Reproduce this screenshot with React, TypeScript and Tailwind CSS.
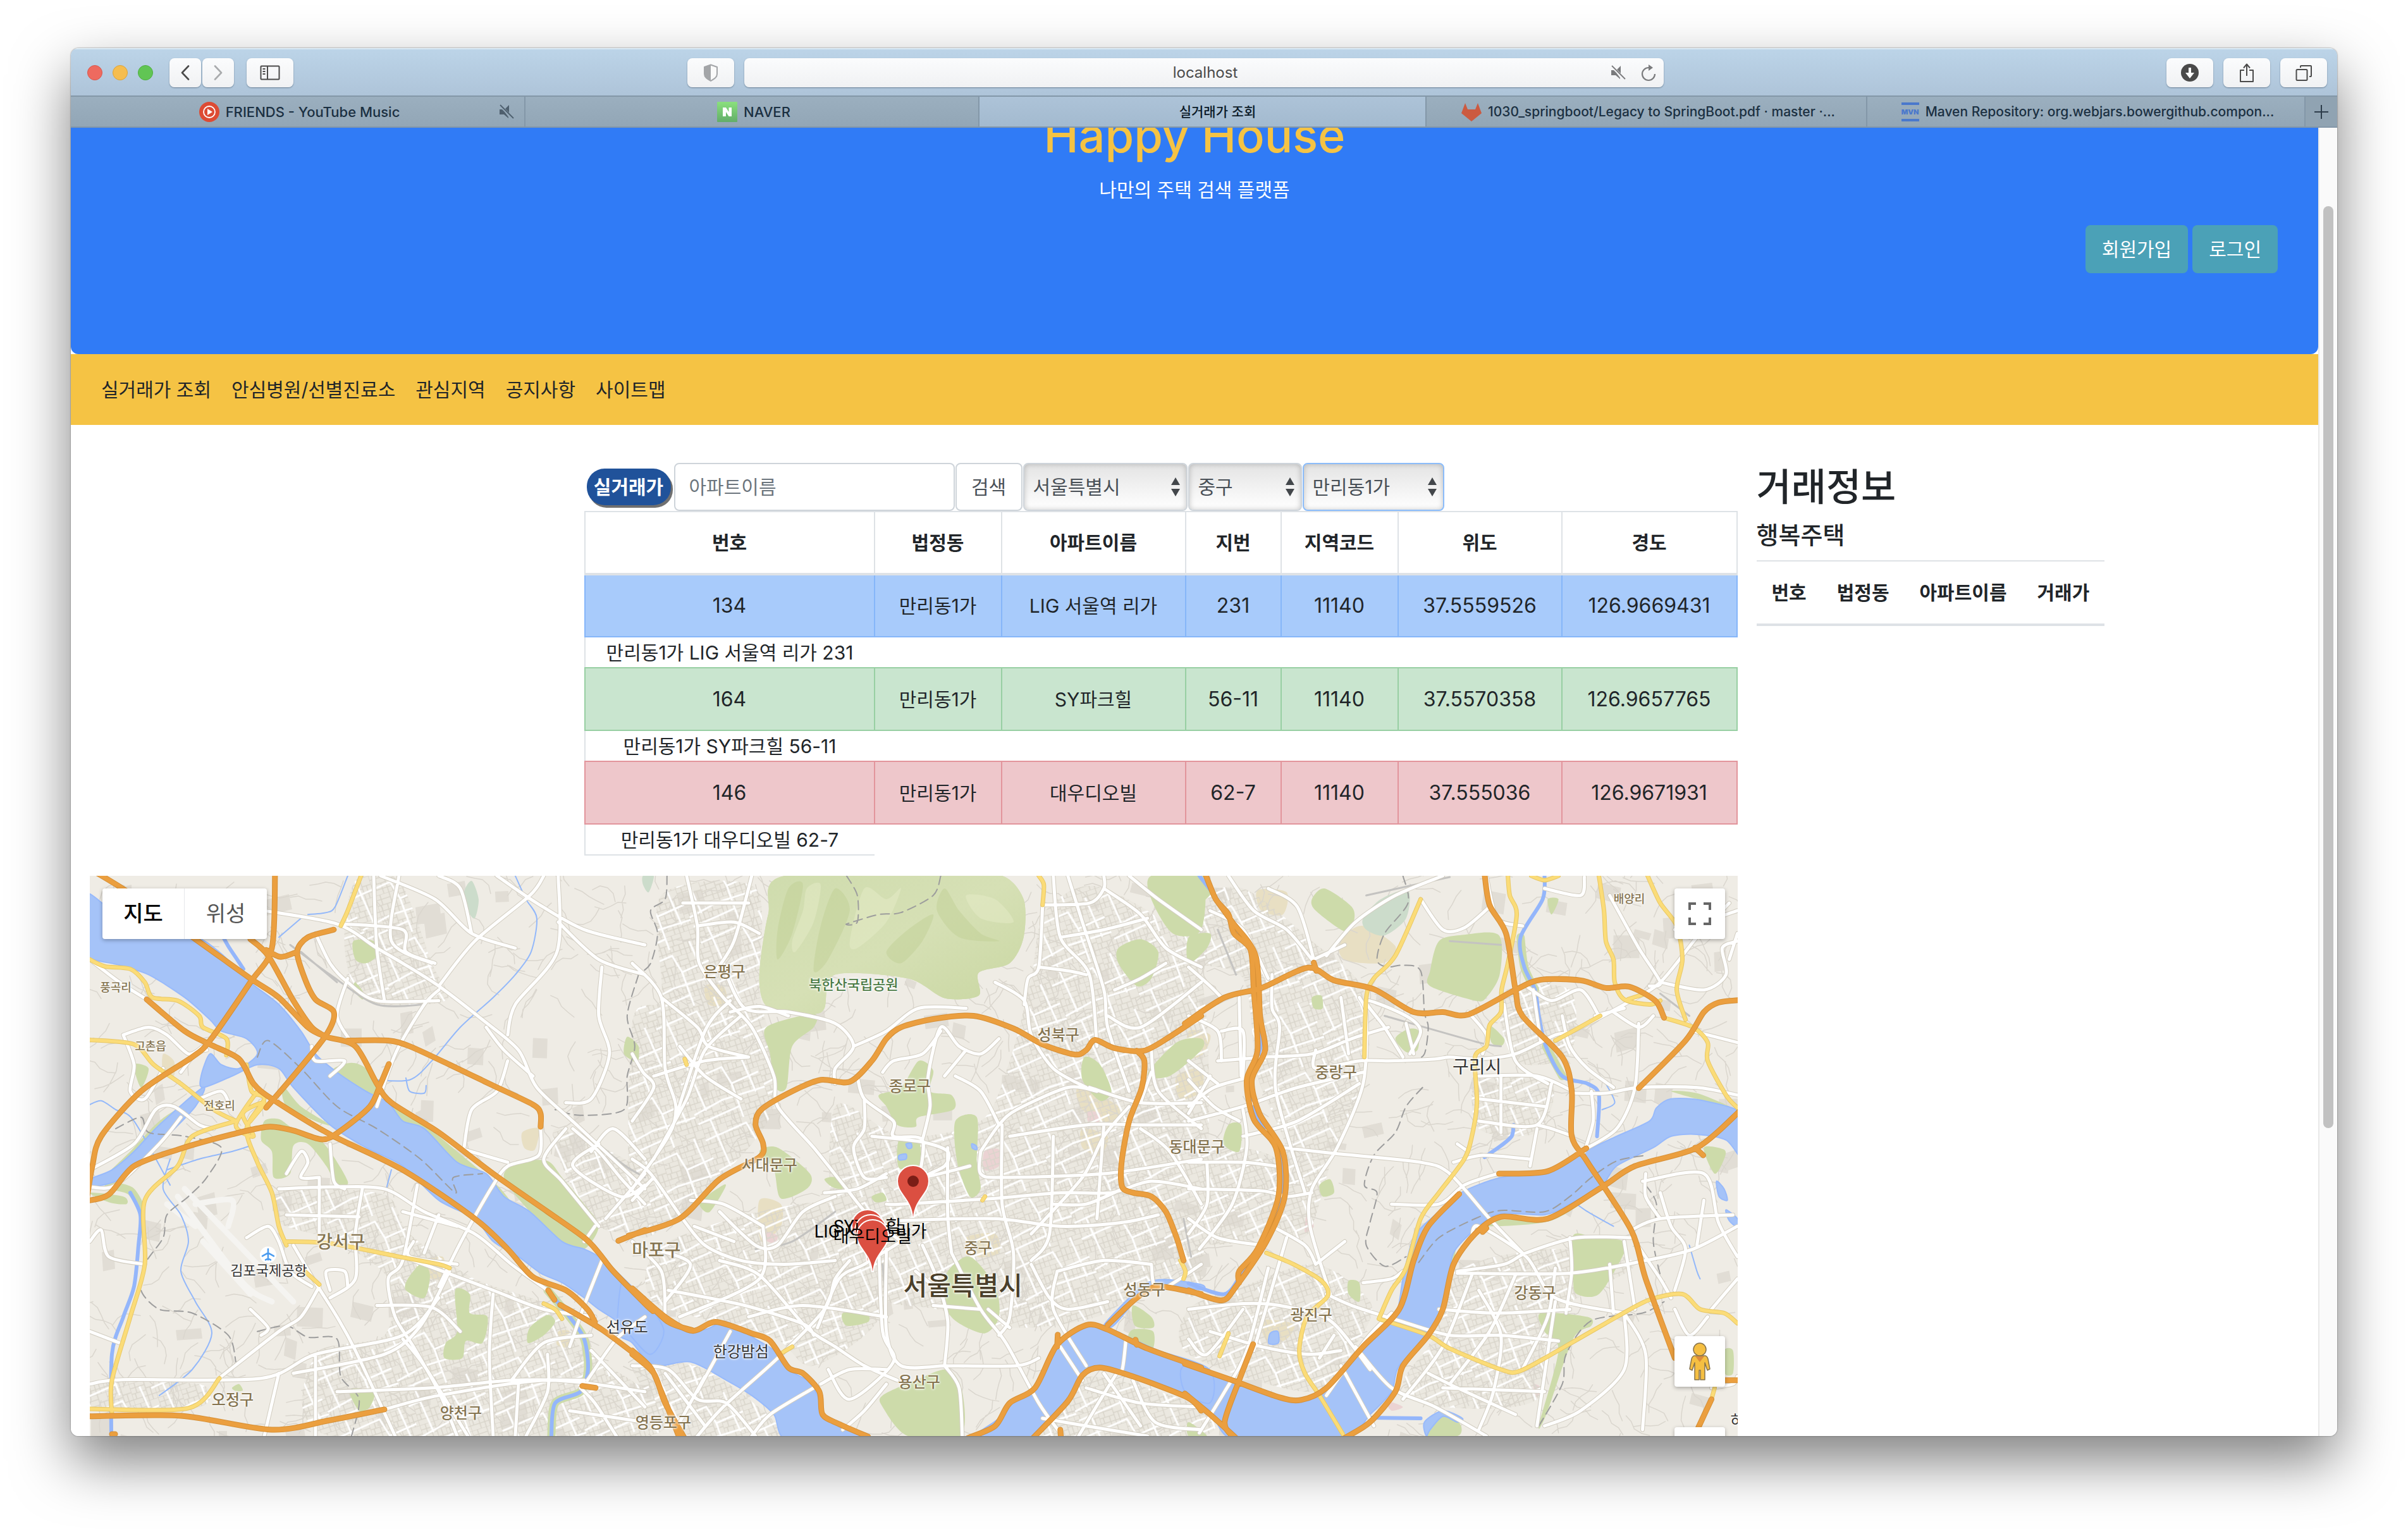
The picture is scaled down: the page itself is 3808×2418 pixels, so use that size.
import React from "react";

type Tile = string[];

const MAP_W = 2606;
const MAP_H = 884;
const ORIGINS = [-22, 858, 1738];
const SX = 0.574;
const SY = 0.593;

const project = (tile: number, u: number, v: number): [number, number] => [
  Math.round(ORIGINS[tile] + u * SX),
  Math.round(v * SY - 16),
];

function smooth(tile: number, src: string, closed = false): string {
  const p = src.split(" ").map((s) => {
    const [u, v] = s.split(",").map(Number);
    return project(tile, u, v);
  });
  const n = p.length;
  const at = (i: number) => (closed ? p[(i + n) % n] : p[Math.max(0, Math.min(n - 1, i))]);
  let d = `M${p[0][0]} ${p[0][1]}`;
  const last = closed ? n : n - 1;
  for (let i = 0; i < last; i++) {
    const a = at(i - 1);
    const b = at(i);
    const c = at(i + 1);
    const e = at(i + 2);
    d += `C${(b[0] + (c[0] - a[0]) / 7).toFixed(1)} ${(b[1] + (c[1] - a[1]) / 7).toFixed(1)} ${(c[0] - (e[0] - b[0]) / 7).toFixed(1)} ${(c[1] - (e[1] - b[1]) / 7).toFixed(1)} ${c[0]} ${c[1]}`;
  }
  return closed ? d + "Z" : d;
}

const layer = (tiles: Tile[], closed = false) =>
  tiles.map((t, i) => t.map((s) => smooth(i, s, closed)).join("")).join("");

const WATER: Tile[] = [
  [
    "20,75 100,120 200,185 330,190 400,235 480,310 560,370 620,440 660,500 720,550 800,600 860,630 900,680 960,700 1050,790 1130,820 1180,880 1250,920 1340,1000 1400,1020 1440,1040 1500,1090 1580,1170 1620,1240 1580,1300 1500,1220 1440,1180 1400,1150 1340,1110 1280,1085 1220,1040 1150,1000 1100,940 1000,890 900,800 800,750 700,690 600,590 560,540 500,530 430,560 350,590 345,560 370,500 400,530 450,540 500,500 470,460 400,440 370,410 300,350 200,290 120,265 20,230",
    "38,835 100,810 160,760 230,690 350,590 330,640 250,720 170,800 110,840 38,855",
  ],
  [
    "-30,1110 0,1140 60,1190 130,1235 200,1235 260,1215 340,1260 390,1290 430,1340 480,1370 510,1410 530,1470 600,1500 650,1530 430,1530 390,1460 330,1410 260,1370 160,1320 60,1330 0,1270 -40,1240",
    "920,1540 1010,1470 1040,1430 1110,1390 1150,1310 1190,1260 1250,1225 1310,1230 1380,1260 1450,1290 1590,1340 1590,1430 1480,1390 1360,1350 1290,1335 1240,1360 1200,1430 1150,1470 1080,1540",
    "1300,1222 1370,1150 1420,1110 1470,1102 1568,1115 1568,1128 1470,1118 1430,1128 1380,1165 1325,1225",
    "735,770 755,768 755,780 735,782",
    "755,740 768,738 770,750 760,752",
    "935,740 948,745 950,755 938,752",
  ],
  [
    "-10,1330 140,1375 260,1415 340,1410 400,1370 500,1270 570,1200 590,1100 620,990 680,930 750,870 860,830 1000,810 1080,765 1180,720 1270,680 1290,645 1330,620 1420,625 1530,665 1530,780 1480,730 1400,715 1330,720 1280,750 1180,800 1140,850 1050,900 980,930 860,925 800,960 730,1030 710,1130 670,1240 580,1330 560,1400 500,1460 420,1530 130,1530 60,1450 -10,1400",
    "225,1245 245,1240 248,1270 222,1272",
    "1455,840 1475,860 1485,890 1462,880",
    "1480,915 1512,940 1512,962 1490,945",
    "650,1480 700,1450 755,1470 740,1480 700,1465 665,1500 655,1517",
  ],
];

const STREAMS: Tile[] = [
  [
    "400,180 420,215 445,250 462,275",
    "150,870 178,930 172,1010 160,1120 130,1200 100,1300 98,1517",
    "1300,1130 1360,1200 1400,1260 1412,1340 1390,1400 1320,1430 1310,1517",
  ],
  [],
  [
    "980,27 975,90 915,190 925,270 955,330 965,400 985,480 1030,560 1100,580 1130,610 1125,720",
    "30,27 75,85 115,150 175,225 190,330 198,480 168,565 188,670 250,755 258,875 210,990 150,1080 100,1140 0,1112",
    "815,775 860,745 890,720 895,690",
    "500,1468 640,1470",
  ],
];

const BANKS: Tile[] = [
  ["90,850 150,865 180,910", "1300,1130 1360,1200 1400,1260 1412,1340 1390,1400 1320,1430 1310,1517"],
  [],
  ["915,190 925,270 955,330", "985,480 1030,560"],
];

const THIN_STREAMS: Tile[] = [
  [
    "750,27 715,110 690,125 640,130",
    "1210,27 1240,90 1270,140 1255,230 1210,290 1150,350 1060,430 980,520 920,570 820,570",
    "910,565 920,600 960,605 965,585",
    "260,780 240,860 290,930 310,1000 290,1080 330,1160 375,1245 320,1340 230,1410",
    "38,635 70,625 110,650 160,680 260,850",
    "250,810 340,780 430,760 480,745",
    "870,810 855,860",
    "560,190 620,140",
  ],
  [],
  ["1040,880 1100,920 1170,960", "1150,580 1175,630 1140,650", "1380,1010 1400,1080 1410,1100"],
];

const PARKS: Tile[] = [
  [
    "710,540 760,525 800,540 830,590 810,610 740,595 705,570",
    "520,680 560,675 600,700 680,735 750,840 720,850 690,800 640,740 600,745 590,820 545,830 540,760 510,730",
    "570,585 620,640 700,690 660,680 580,640",
    "1180,830 1220,790 1300,785 1340,830 1400,900 1440,960 1400,1020 1340,1000 1250,920",
    "1045,1130 1085,1140 1085,1190 1135,1200 1120,1270 1075,1265 1065,1310 1015,1310 1020,1270 1050,1240",
    "955,1055 975,1090 960,1150 910,1130 915,1100",
    "765,200 820,200 830,240 800,260 770,250",
    "1520,455 1550,480 1545,520 1510,500",
    "180,590 200,540 160,530",
    "1245,1270 1250,1230 1300,1195 1320,1215 1290,1250",
    "38,870 130,880 140,900 90,895",
    "150,760 230,680 300,640 250,720 190,790 110,850 80,830",
    "755,1395 820,1400 810,1440 780,1450",
    "770,310 795,340 790,355 765,330",
    "430,1390 450,1380 460,1397 440,1398",
    "860,620 950,680 1050,760 1160,850 1200,900 1130,850 1040,790 950,720 870,655",
  ],
  [
    "420,27 880,27 1020,27 1078,90 1078,190 1040,260 955,285 955,345 860,352 760,300 560,290 530,380 500,395 430,390 365,370 350,290 375,130",
    "370,430 500,395 500,430 440,480 425,590 395,590 380,500",
    "680,610 740,590 790,520 830,545 820,600 880,610 885,650 790,670 780,695 730,690 700,640",
    "735,730 790,728 790,800 735,805",
    "890,680 950,670 950,790 960,860 930,880 895,790",
    "870,1080 930,1040 1000,1120 1010,1200 970,1245 890,1210 850,1150",
    "690,1410 780,1370 870,1340 910,1400 905,1517 760,1517 690,1440",
    "1430,27 1568,27 1568,170 1490,180 1430,90",
    "1340,220 1400,195 1450,230 1430,300 1390,320 1340,260",
    "1500,470 1568,460 1568,490 1480,560 1420,555",
    "350,760 400,750 490,820 480,860 410,885 390,810",
    "1245,510 1290,530 1320,600 1290,625 1240,570",
    "230,1265 280,1260 340,1300 300,1310 235,1295",
    "580,1190 645,1190 650,1215 590,1225",
    "660,880 690,870 700,890 670,895",
    "1380,1170 1430,1200 1435,1230 1385,1225",
    "1380,1235 1435,1240 1430,1290 1370,1260",
    "0,480 18,500 15,520 0,518",
    "190,890 250,850 255,860 215,920 190,910",
    "530,835 560,830 580,860 550,855",
  ],
  [
    "690,200 760,183 855,185 857,290 820,350 790,360 665,320 665,280",
    "340,90 375,60 450,110 455,150 430,175 350,120",
    "0,27 50,27 65,70 0,120",
    "0,190 60,180 50,220 0,260",
    "605,435 635,440 630,490 600,495 570,460",
    "110,690 145,690 140,760 95,740",
    "360,850 390,835 400,870 370,880",
    "830,425 870,460 860,480 835,470",
    "770,870 860,835 1000,812 990,828 870,845 800,880",
    "820,945 980,935 1120,870 1000,945 830,960",
    "735,1020 715,1130 665,1240 640,1240 680,1100 700,1040",
    "1060,985 1120,990 1200,1000 1195,1040 1130,1140 1070,1140 1060,1100",
    "970,1190 1100,1200 1110,1225 1060,1260 990,1450 965,1490 1020,1290 980,1240",
    "670,1470 720,1460 750,1490 740,1517 655,1517",
    "1420,750 1475,755 1475,780 1450,820",
    "1330,600 1400,605 1490,640 1420,625",
    "440,1105 470,1110 470,1160 440,1140",
    "340,350 365,345 370,380 345,380",
    "990,90 1020,90 1000,130",
    "60,1360 150,1395 270,1430 180,1420",
    "0,1480 50,1517 0,1517",
    "1475,1290 1500,1290 1500,1350 1478,1350",
  ],
];

const SAND: Tile[] = [
  ["1230,710 1275,700 1265,755 1235,750", "1330,1240 1360,1240 1355,1280 1325,1275", "940,1060 1010,1040 1010,1100 950,1090", "240,500 270,520 270,560 240,550"],
  ["1230,590 1340,640 1320,690 1240,650", "1500,560 1568,540 1568,600 1510,620", "350,890 410,900 410,960 355,1000", "920,990 1000,980 1010,1030 950,1040", "1240,700 1310,720 1290,770 1240,750", "200,320 250,320 260,370 210,370"],
  ["425,190 480,160 570,215 540,258 440,255 415,230", "190,65 270,70 260,130 200,120", "0,440 60,450 40,500 0,510", "200,1210 290,1220 270,1260 220,1270", "520,100 570,80 605,70 580,110 540,130"],
];

const CEMETERY: Tile[] = [
  ["1070,70 1090,40 1110,90 1100,140 1080,120"],
  ["30,27 60,27 45,70 30,50"],
  ["480,140 530,90 605,65 600,140 540,185 490,170"],
];

const PINK: Tile[] = [
  [],
  ["970,760 1010,755 1010,800 970,810", "370,975 400,985 390,1005 365,995", "1255,655 1290,660 1280,690 1258,685"],
  ["325,930 345,960 320,975", "545,1425 590,1440 560,1450", "950,1380 970,1390 960,1415"],
];

const URBAN: Tile[] = [
  [
    "560,860 700,860 860,880 920,980 1100,1100 1300,1170 1400,1290 1568,1400 1568,1517 700,1517 660,1300 850,1250 860,1100 720,1000 560,950",
    "38,1380 340,1380 340,1440 38,1440",
    "1330,700 1568,820 1568,960 1440,960 1340,800",
    "770,40 890,40 980,260 1020,360 800,360 740,220",
  ],
  [
    "80,80 340,60 350,330 390,500 390,640 320,750 130,930 0,960 0,420 80,350",
    "560,640 740,720 960,680 1040,520 1100,300 1140,120 1300,60 1568,300 1568,1100 1450,1100 1280,1200 1050,1230 840,1180 680,1150 560,1000",
    "100,1000 560,900 690,1180 500,1330 380,1250 60,1160",
    "1120,1450 1260,1360 1568,1440 1568,1517 1120,1517",
    "0,1330 200,1340 420,1517 160,1517",
  ],
  [
    "0,100 150,60 340,200 480,330 480,560 400,760 330,980 240,960 270,760 190,560 150,300 0,250",
    "0,760 240,780 200,980 0,990",
    "150,1120 350,1060 500,1160 470,1260 340,1400 0,1300 0,1180",
    "730,1080 1000,1020 1230,1060 1000,1200 960,1420 700,1440 590,1380 680,1250",
    "800,560 1000,580 960,710 800,700",
    "860,340 1050,330 1050,500 900,520",
  ],
];

const ROADS: Tile[] = [
  [
    "38,250 120,310 195,355",
    "520,120 720,155 830,220 900,260 1000,320 1120,410 1220,490 1270,590 1380,690 1568,860",
    "1160,27 1270,100 1400,170 1568,210",
    "1000,330 960,370 890,480 860,550 830,640",
    "1280,695 1275,770 1190,800 1150,850 1095,940 1050,1020 1000,1120",
    "1000,320 1100,200 1250,80 1290,27",
    "1330,27 1325,230 1210,370 1190,450",
    "750,300 720,400 760,470",
    "660,180 700,260 750,310 830,360 1000,360",
    "820,27 830,220 850,360",
    "890,27 870,200 980,260",
    "740,155 900,170 910,230 990,260",
    "560,860 700,855 850,860 960,920 1100,980 1200,1060 1300,1130",
    "940,850 900,1050 860,1100 880,1200 930,1280 1000,1400 1050,1517",
    "790,860 770,980 770,1100 700,1150",
    "670,830 670,1000",
    "580,930 780,935",
    "600,1010 660,1110 720,1200 770,1290 880,1517",
    "38,1380 130,1367 510,1365 660,1300 900,1250 1000,1150",
    "600,1350 850,1300 950,1225 1030,1080",
    "900,1260 960,1330 1080,1517",
    "720,1400 980,1390 1200,1370 1400,1370",
    "850,1447 1000,1410 1300,1370 1568,1400",
    "670,1120 620,1200 560,1240 400,1360",
    "660,1300 660,1517",
    "560,1350 520,1517",
    "900,1040 1010,1080 1150,1130 1290,1180 1430,1200",
    "1150,1140 1140,1300 1150,1517",
    "1200,1370 1290,1270 1420,1250",
    "1450,1050 1400,1170 1360,1280",
    "1300,1300 1300,1400 1240,1517",
    "1220,1380 1210,1517",
    "1370,700 1440,760 1500,830 1568,900",
    "1350,700 1290,780 1340,840 1440,960",
    "1440,740 1370,800 1500,880 1568,850",
    "1460,940 1568,820",
    "1430,960 1400,1000",
    "900,920 1050,960",
    "1070,750 1090,650 1160,600 1190,520",
    "1070,755 1190,790",
    "38,855 110,850 230,740 290,670",
    "38,810 160,740 220,650 270,640 340,690 380,700",
    "130,450 160,530 150,600 190,620 240,540",
    "130,450 200,430 250,450 310,500 350,480",
    "290,550 330,500 360,490",
    "340,620 400,600 420,640 370,640",
    "470,990 530,960 560,1000 590,1080 650,1120",
    "38,1000 70,970 90,1040 190,1060",
    "480,1180 530,1230 510,1250",
    "700,1130 690,1080 740,1080 750,1120",
    "580,820 620,760 640,790 620,830 670,830",
    "700,740 710,840 740,860",
    "650,480 660,520 740,520 700,560",
    "1130,430 1180,490 1260,560",
    "840,27 990,90 1090,180 1210,220",
    "1090,180 1060,60 1000,27",
    "1450,270 1440,400 1470,500 1420,620 1350,630",
    "38,1240 120,1270",
    "1330,150 1440,250 1568,290",
    "930,1000 920,1040 1050,1060",
    "1000,930 960,1030",
    "830,1170 980,1175 1060,1240",
    "1490,1517 1430,1430 1390,1390",
    "1410,1370 1490,1260 1568,1200",
    "1420,1290 1568,1440",
    "1360,1450 1568,1480",
    "1568,780 1480,700 1420,760",
  ],
  [
    "150,27 180,160 185,260 250,350 330,430 390,560 400,640 500,750 590,860 650,930 740,1000",
    "0,260 80,350 90,540 120,640 100,720 0,860",
    "80,350 180,430 210,480 320,510",
    "60,560 200,520 320,510",
    "330,27 280,200 230,280",
    "140,100 320,100",
    "180,160 280,150 350,180",
    "0,500 30,550 60,590 0,680",
    "130,480 200,560 300,620",
    "300,400 200,490 150,620 60,780",
    "270,360 200,440 110,700",
    "0,780 50,820 130,930",
    "250,270 310,380 430,390 560,420 610,480 560,540 560,580",
    "270,390 350,375 430,400",
    "610,480 700,440 790,380 920,380",
    "620,560 640,620 720,680 720,720 800,730 790,840",
    "800,730 820,640 815,560 850,430 900,480 960,500 1010,460",
    "640,620 640,700 610,750 640,830 700,830",
    "690,550 720,520 800,500 850,440",
    "560,880 470,920 400,1010 340,1010 240,920",
    "530,870 620,860 700,820",
    "700,900 740,900 1000,885 1180,870 1320,870 1430,840 1568,860",
    "740,945 1000,940 1180,960 1350,950 1450,930",
    "660,720 800,735 870,760 860,800 800,830 930,800",
    "870,750 870,930 880,1030",
    "960,760 1010,690 1060,650 1200,590 1280,600",
    "960,760 960,820 1020,830 1300,820 1568,780",
    "1020,690 1020,900 1050,1030 1040,1200 1010,1250",
    "1040,720 1250,690 1400,690 1568,690",
    "1160,720 1150,980 1100,1050",
    "1300,690 1280,940",
    "1370,640 1300,720 1240,830 1100,980",
    "1260,590 1400,630 1568,630",
    "1000,310 1080,360 1100,450 1160,540 1250,590",
    "1130,110 1120,270 1090,300 1080,370",
    "1130,105 1260,100 1300,60 1300,27",
    "1160,27 1180,190 1260,290 1280,480",
    "1200,27 1240,150 1300,330 1310,430 1370,600",
    "1300,60 1400,130 1470,220 1568,270",
    "1370,27 1450,90 1568,170",
    "1330,330 1400,300 1470,260",
    "1120,270 1200,280 1250,290",
    "1180,190 1300,170 1420,140",
    "1310,400 1400,430 1568,310",
    "1430,490 1450,600 1568,700",
    "1400,700 1480,760 1568,900",
    "1350,860 1250,900 1160,900",
    "130,930 200,1010 300,1050 420,1060 560,1050",
    "240,1050 350,1090 480,1230 560,1280 640,1330 730,1370",
    "360,960 350,1100 130,1200",
    "60,1020 160,1060 90,1160",
    "0,1000 80,1080 90,1190",
    "100,1130 310,1170 470,1220 500,1250",
    "320,1200 470,1170 700,1200",
    "600,1050 560,1100 530,1180 400,1310 250,1440 180,1517",
    "740,1000 640,1060 570,1100 510,1230",
    "700,1020 700,1240 740,1330 860,1330",
    "860,1330 870,1210 840,1100 800,1010",
    "680,1020 690,1240 720,1320 600,1420 540,1340",
    "880,1030 960,1180 1030,1270 1120,1430 1180,1510",
    "1040,1230 980,1180",
    "830,1170 960,1180",
    "860,1330 900,1390 910,1517",
    "860,1330 1060,1330 1120,1310",
    "1170,1080 1160,1180 1250,1330",
    "1100,1060 1150,1150 1200,1180 1310,1160",
    "1170,1080 1300,1050 1430,1060",
    "1180,1280 1240,1370",
    "1360,1260 1350,1340 1330,1360 1230,1517",
    "500,1390 380,1460 330,1517",
    "270,1240 180,1400",
    "0,1330 100,1340 180,1420 260,1430 340,1517",
    "90,1350 200,1490",
    "200,1360 130,1480",
    "520,1380 600,1340 700,1340",
    "1130,1470 1250,1490 1420,1517",
    "1300,1350 1400,1490",
    "1380,1370 1440,1480 1568,1500",
    "1250,1390 1400,1430 1568,1440",
    "1430,1060 1450,1130 1568,1060",
    "580,1500 640,1450 700,1380",
    "780,1080 850,1140 870,1210",
    "890,560 960,600 1010,690",
    "860,560 920,490",
    "1430,550 1400,630",
    "0,890 60,830",
    "160,890 250,900 360,960",
    "170,960 280,1000",
  ],
  [
    "0,270 60,320 90,350",
    "110,27 180,120 270,170 340,250",
    "60,120 150,170 220,300",
    "220,60 300,110 345,250",
    "380,240 460,150 570,80 700,27",
    "345,250 430,210",
    "0,400 80,440 90,520",
    "90,440 150,440 150,560",
    "80,520 210,510 340,500 450,460 550,430",
    "140,350 145,560",
    "0,640 70,590 180,560",
    "230,290 230,380 250,430 240,600 320,870",
    "350,490 350,540 470,520 550,520 680,515 720,510 800,515 900,500 1010,450 1060,440 1200,370 1300,310 1400,190 1490,100",
    "420,350 440,500",
    "470,350 490,400 480,580 410,750 340,860 335,960 390,1140",
    "0,680 150,640 300,590 480,550",
    "150,720 300,680 470,580",
    "260,750 400,765 640,790 720,820 830,940 930,1040",
    "0,790 150,790 240,800",
    "0,860 200,865 270,880 340,870",
    "50,790 50,900 0,980",
    "150,650 160,750 120,900 30,1020",
    "0,940 80,990 200,1010",
    "230,960 320,1010 350,1060",
    "220,1070 160,1290 100,1400 30,1510",
    "270,990 180,1290",
    "0,1180 150,1165 250,1170 390,1210 500,1340",
    "150,1180 50,1300 0,1260",
    "380,1140 450,1170 580,1210 720,1250 860,1250 1020,1265",
    "60,1240 200,1280 330,1300 420,1290",
    "460,1280 560,1390 680,1440 820,1517",
    "420,1330 510,1490",
    "400,1250 360,1310",
    "380,1410 490,1260 560,1190",
    "690,1180 850,1190 1050,1180",
    "780,990 800,960 930,1040 1010,1150 1200,1190",
    "740,1085 1050,1085 1260,1050 1390,1020 1512,960",
    "740,1080 870,1060 930,1030 1070,990 1220,990",
    "1050,990 1055,1080 1040,1190",
    "780,1090 700,1280 590,1420",
    "900,1090 830,1240 720,1380",
    "1010,1070 990,1200 920,1340",
    "1160,1060 1170,1190",
    "800,1130 860,1250 840,1400 800,1500",
    "1200,1000 1230,1180",
    "1200,1190 1260,1300 1250,1500",
    "1200,1190 1200,1340 1080,1450 980,1490",
    "1250,840 1420,820 1460,950 1512,1040",
    "1260,820 1260,880 1300,940",
    "1220,970 1300,940 1500,930",
    "1300,870 1330,960 1370,1020 1340,1130",
    "1420,890 1400,1010",
    "1230,1000 1300,1100 1330,1150",
    "1440,1180 1512,1100",
    "700,1390 980,1400",
    "660,1350 740,1390 900,1460",
    "1010,1160 960,1490",
    "1060,605 1150,605 1240,590 1400,590 1512,610",
    "1240,420 1230,590 1180,700 1080,760",
    "1110,600 1115,680 1090,760",
    "930,320 1000,360 1080,330 1130,400",
    "1030,400 1050,480 1100,540 1170,590",
    "870,370 900,520 990,580",
    "950,330 970,470",
    "800,560 960,560 1060,600",
    "800,620 980,640",
    "860,560 860,710",
    "800,680 960,690 1000,580",
    "940,800 960,700",
    "770,390 820,450 810,500",
    "590,510 540,430 490,360 600,400 640,440 610,500",
    "730,790 810,770 940,780",
    "620,500 600,420",
    "740,740 770,760",
    "560,900 690,900 760,850 850,820",
    "1160,80 1240,220 1300,310 1270,320",
    "1170,390 1240,430 1280,400",
    "1300,310 1420,330 1480,290 1470,220 1512,200",
    "1410,190 1460,140 1512,120",
    "640,90 700,170 760,165 830,110",
    "920,160 850,140 820,27",
    "980,60 1080,80 1090,30",
    "1340,170 1380,190",
    "1490,250 1512,180",
    "1390,440 1512,470",
    "1120,400 1200,380",
    "1060,720 1000,700 960,690",
    "0,570 70,640 140,680",
    "0,520 80,580",
    "60,560 0,660",
    "1340,1180 1380,1250 1430,1200",
    "1440,1390 1500,1380 1512,1360",
    "350,1060 430,1000",
    "480,1110 560,1100 590,1080",
  ],
];

const LANES: Tile[] = [
  ["590,210 700,290 830,370 960,370", "620,230 720,310", "1568,830 1500,790 1380,690"],
  ["690,1060 700,1180", "340,1020 440,1000 560,920", "1520,940 1540,1040"],
  ["540,400 800,470 860,480", "80,170 130,290", "490,80 720,30", "720,200 860,210", "1300,340 1380,400"],
];

const RUNWAYS: Tile[] = [
  ["280,880 460,1110 540,1160", "300,860 500,1060 600,1160", "330,900 430,890 420,960", "350,1000 480,1140", "250,900 330,960"],
  [],
  [],
];

const DASHES: Tile[] = [
  ["500,510 530,465 620,540 720,640 830,700 950,780 1045,870 1040,830 1120,820", "1550,290 1520,400 1540,480 1520,560 1510,650 1390,665 1320,650", "110,700 180,670 200,710 300,720 400,750 360,830 310,880 250,930 240,990 190,1060 180,1130 230,1180 320,1190 420,1250 440,1320", "500,1240 580,1225 640,1255 720,1260 730,1360 780,1420 760,1517"],
  ["590,27 620,80 620,150 590,155 680,130 740,125 830,80 850,27", "95,27 90,90 50,120 70,180 50,260 15,290"],
  ["590,27 605,100 540,180 520,250 545,270 590,265 640,280 650,390 660,430 650,500 620,520", "645,590 600,640 570,710 510,770 485,850 520,870 500,950 490,1010 540,1065 600,1040", "635,1055 690,990 790,940 860,918 980,920 1050,880 1110,830 1180,785 1260,770", "1260,850 1290,900 1280,1000 1300,1090", "965,1490 1030,1380 1040,1300 1110,1210 1250,1190 1310,1160"],
];

const YELLOW: Tile[] = [
  [
    "785,27 750,120 730,160",
    "38,250 80,268 150,275 190,310 210,350 280,360 340,400 350,430 415,460 415,505",
    "38,463 160,475 215,530 290,580 380,650 440,680",
    "470,530 485,600 520,620 470,700 500,790 540,870 560,960 580,1010",
    "440,680 320,720 280,800 190,890 190,1060 150,1200 100,1370 100,1460",
    "575,1000 700,1005 890,1040 1000,1060 1030,1070",
    "630,1080 670,1115",
    "38,1446 310,1443 395,1365",
    "1290,1165 1320,1180 1340,1205",
    "500,600 440,690 490,720 460,660 520,630 480,680",
  ],
  ["1120,27 1135,50 1130,105", "145,515 150,530", "415,1295 440,1280", "965,890 972,880", "1510,1050 1525,1080 1520,1100"],
  [
    "640,90 570,240 510,300 490,350 485,510",
    "215,1030 290,1060 365,1105 383,1145 325,1200 305,1290 320,1350 360,1410 425,1512",
    "110,1245 85,1305",
    "880,27 885,80 905,130 880,260 862,330 860,390 830,425 820,480 790,510 795,630 780,720 760,780 690,870 640,940 600,1070 560,1130 525,1205",
    "525,1205 660,1250 720,1285 860,1340 910,1345 1000,1300 1180,1200 1270,1155 1360,1140 1410,1180 1475,1190 1512,1218",
    "1130,27 1145,120 1150,200 1170,250 1175,310 1200,355 1270,370 1300,360",
    "945,27 980,38 1020,27",
    "1265,27 1300,100 1345,160 1360,250 1345,330 1370,410",
    "1310,405 1390,430 1430,470 1430,520 1480,610 1512,645",
    "1260,340 1210,355",
    "1135,400 1060,440 1010,465",
    "1450,1390 1440,1420",
  ],
];

const ORANGE: Tile[] = [
  [
    "50,15 150,75 330,195 480,300 560,350 640,430 690,455 770,480 830,580 870,630 1000,710 1150,820 1300,920 1400,990 1440,1030 1480,1080 1568,1165 1590,1185",
    "548,20 540,220 480,310 370,465 320,510 180,600 70,720 45,800 30,890",
    "480,195 530,240 600,360 650,430 690,455",
    "710,170 640,190 610,230 630,300 660,355 710,390 690,450 600,560 525,645",
    "525,225 565,242 610,230",
    "750,465 860,465 920,480 1030,530 1150,585 1260,635 1280,660 1280,695",
    "195,355 300,440 370,475 450,515 490,580 540,620 700,715 900,810 1100,940 1190,1020 1260,1095 1350,1130 1410,1180 1430,1215",
    "30,892 90,875 160,800 280,755 430,715 530,695 600,705 680,728 730,705 810,640 840,580 863,527",
    "30,1465 290,1463 540,1500 700,1475 850,1447",
    "1335,1168 1450,1235 1568,1320",
    "1302,1130 1318,1155",
    "1395,1385 1432,1390",
    "1495,998 1568,970",
    "100,1512 108,1512",
  ],
  [
    "-10,984 130,940 240,835 350,775 360,740 340,690 355,650 440,600 520,570 600,575 660,520 700,460 740,430 830,408 940,400 1050,433 1130,475 1220,503 1250,490 1275,463 1330,485 1410,492 1480,455 1568,400",
    "1390,492 1412,520 1405,590 1370,680 1348,790 1350,855 1380,870 1430,880 1470,920 1500,990 1520,1050",
    "0,1125 90,1200 165,1238 230,1215 330,1245 380,1265 430,1335 470,1350 515,1400 525,1460 570,1485 650,1520",
    "30,1150 100,1215 165,1236",
    "0,1300 60,1350 90,1430 145,1525",
    "0,1290 50,1335 80,1400 130,1525",
    "925,1522 1000,1490 1040,1430 1110,1390 1170,1275 1250,1223 1310,1235 1420,1285 1568,1335",
    "1105,1522 1200,1425 1240,1355 1290,1335 1380,1360 1530,1415 1568,1450",
    "1310,1223 1390,1150 1450,1120 1568,1140",
    "1172,1248 1170,1280",
    "1180,1500 1182,1520",
    "1386,1262 1390,1275",
  ],
  [
    "45,20 75,90 110,130 125,180 170,225 180,330 190,490 160,570 180,675 240,750 248,880 190,1020 140,1080 140,1110",
    "75,90 120,150 185,240 196,400 210,490 175,570 195,660 260,760 265,880 215,1000 130,1120 90,1157 0,1130",
    "-10,420 100,350 200,325 330,272 400,305 510,328 620,390 700,390 770,397 900,330 970,303 1080,305 1150,325 1215,322 1285,360 1310,405",
    "345,258 352,280",
    "815,20 830,105 875,180 900,330 920,400 1030,510 1055,600 1055,720 1100,790 1220,970 1260,1100 1340,1310",
    "1240,592 1370,465 1420,390 1460,365 1520,357",
    "855,820 990,812 1095,752",
    "1520,652 1400,750 1230,800 1140,855 990,940 860,935 790,980 730,1060 700,1180 660,1250 590,1330 570,1400 500,1480 430,1522",
    "1395,750 1418,770",
    "745,873 660,960 620,1050 580,1180 480,1280 380,1390 310,1422 250,1415 120,1370 -10,1325",
    "178,1273 140,1370 100,1480 125,1522",
    "-10,1405 60,1460 130,1522",
    "1477,1370 1520,1370",
    "1440,1420 1405,1495",
    "810,975 820,965",
  ],
];

/* Deterministic scatter of short crooked side streets. */
function sideStreets(): string {
  let s = 7;
  const r = () => {
    s = (s * 16807) % 2147483647;
    return s / 2147483647;
  };
  let d = "";
  for (let i = 0; i < 1300; i++) {
    let x = r() * MAP_W;
    let y = r() * MAP_H;
    let a = r() * 6.3;
    d += `M${x.toFixed(0)} ${y.toFixed(0)}`;
    for (let k = 0; k < 4; k++) {
      a += (r() - 0.5) * 1.4;
      x += Math.cos(a) * 13;
      y += Math.sin(a) * 13;
      d += `L${x.toFixed(0)} ${y.toFixed(0)}`;
    }
  }
  return d;
}

function blocks(): string {
  let s = 91;
  const r = () => {
    s = (s * 16807) % 2147483647;
    return s / 2147483647;
  };
  let d = "";
  for (let i = 0; i < 200; i++) {
    const x = r() * MAP_W;
    const y = r() * MAP_H;
    const w = 12 + r() * 30;
    const h = 10 + r() * 26;
    const k = (r() - 0.5) * 20;
    d += `M${x.toFixed(0)} ${y.toFixed(0)}l${w.toFixed(0)} ${k.toFixed(0)}l${(-k / 2).toFixed(0)} ${h.toFixed(0)}l${(-w).toFixed(0)} ${(-k).toFixed(0)}z`;
  }
  return d;
}

const SIDE = sideStreets();
const BLOCKS = blocks();

type Label = { t: number; u: number; v: number; text: string; cls: string };
const gu = "text-[24px] font-medium text-[#857450]";
const guL = "text-[28px] font-medium text-[#857450]";
const ri = "text-[18px] font-medium text-[#857450]";
const poi = "text-[24px] text-[#333333]";

const LABELS: Label[] = [
  { t: 0, u: 110, v: 325, text: "풍곡리", cls: ri },
  { t: 0, u: 205, v: 480, text: "고촌읍", cls: ri },
  { t: 0, u: 395, v: 639, text: "전호리", cls: ri },
  { t: 0, u: 730, v: 1004, text: "강서구", cls: guL },
  { t: 0, u: 531, v: 1080, text: "김포국제공항", cls: "text-[22px] text-[#333333]" },
  { t: 0, u: 432, v: 1421, text: "오정구", cls: gu },
  { t: 0, u: 1061, v: 1457, text: "양천구", cls: gu },
  { t: 1, u: -14, v: 1228, text: "선유도", cls: poi },
  { t: 1, u: 300, v: 1294, text: "한강밤섬", cls: poi },
  { t: 1, u: 85, v: 1483, text: "영등포구", cls: gu },
  { t: 1, u: 66, v: 1026, text: "마포구", cls: guL },
  { t: 1, u: 254, v: 284, text: "은평구", cls: gu },
  { t: 1, u: 609, v: 319, text: "북한산국립공원", cls: "text-[22px] font-medium text-[#4a7a45]" },
  { t: 1, u: 1175, v: 451, text: "성북구", cls: gu },
  { t: 1, u: 765, v: 587, text: "종로구", cls: gu },
  { t: 1, u: 378, v: 798, text: "서대문구", cls: gu },
  { t: 1, u: 953, v: 1018, text: "중구", cls: gu },
  { t: 1, u: 911, v: 1119, text: "서울특별시", cls: "text-[41px] font-medium text-[#4a3f2a]" },
  { t: 1, u: 1411, v: 1130, text: "성동구", cls: gu },
  { t: 1, u: 791, v: 1374, text: "용산구", cls: gu },
  { t: 2, u: 22, v: 748, text: "동대문구", cls: gu },
  { t: 2, u: 406, v: 550, text: "중랑구", cls: gu },
  { t: 2, u: 795, v: 536, text: "구리시", cls: "text-[28px] text-[#333333]" },
  { t: 2, u: 1215, v: 90, text: "배양리", cls: ri },
  { t: 2, u: 338, v: 1195, text: "광진구", cls: gu },
  { t: 2, u: 955, v: 1139, text: "강동구", cls: gu },
  { t: 2, u: 1512, v: 1477, text: "하", cls: poi },
];

const MARKERS = [
  { u: 773, v: 937, label: "", dot: true },
  { u: 648, v: 1055, label: "SY파크힐", dot: false },
  { u: 656, v: 1069, label: "LIG 서울역 리가", dot: false },
  { u: 662, v: 1083, label: "대우디오빌", dot: false },
];

const spot = (t: number, u: number, v: number) => {
  const [x, y] = project(t, u, v);
  return { left: `${(x / MAP_W) * 100}%`, top: `${(y / MAP_H) * 100}%` };
};

function MapArt() {
  return (
    <svg viewBox={`0 0 ${MAP_W} ${MAP_H}`} preserveAspectRatio="none" className="block h-full w-full" fill="none" strokeLinecap="round" strokeLinejoin="round" aria-hidden="true">
      <defs>
        <pattern id="streets" width="38" height="34" patternUnits="userSpaceOnUse" patternTransform="rotate(-18)">
          <path d="M0 0H38M0 8H24M24 14H38M0 17H24M0 26H38M0 0V34M9 0V17M16 17V34M24 0V34M31 14V34M6 17V26" stroke="#d9d5cb" strokeWidth="1.6" />
        </pattern>
        <pattern id="avenues" width="120" height="96" patternUnits="userSpaceOnUse" patternTransform="rotate(-24)">
          <path d="M0 10H70L74 40H120M0 62L50 58L120 66M20 0V62M74 40L70 96M104 0V66M20 78V96M0 78H70" stroke="#ffffff" strokeWidth="3" fill="none" />
        </pattern>
        <linearGradient id="mt" x1="0" y1="0" x2="1" y2="1">
          <stop offset="0" stopColor="#cfdcad" />
          <stop offset="0.5" stopColor="#d6e0b5" />
          <stop offset="1" stopColor="#c8d6a0" />
        </linearGradient>
      </defs>
      <rect width={MAP_W} height={MAP_H} fill="#efece5" />
      <path d={layer(URBAN, true)} fill="#ebe8e0" />
      <path d={BLOCKS} fill="#e1ddd5" />
      <path d={layer(SAND, true)} fill="#e8dfc3" />
      <path d={layer(PINK, true)} fill="#ebd3d3" />
      <path d={layer(URBAN, true)} fill="url(#streets)" />
      <path d={SIDE} stroke="#dad6ce" strokeWidth="1.5" />
      <path d={layer(URBAN, true)} fill="url(#avenues)" />
      <path d={layer(RUNWAYS)} stroke="#f5f4f1" strokeWidth="9" />
      <path d={layer(PARKS, true)} fill="#cddbaa" />
      <path d={smooth(1, PARKS[1][0], true)} fill="url(#mt)" />
      <path d={layer([[], ["430,60 470,50 440,180 400,250 400,170", "560,60 600,120 540,250 500,280 520,160", "860,60 900,120 960,180 1010,200 900,190 840,120", "700,230 760,170 830,130 800,200 740,260"], []], true)} fill="#bfce92" opacity="0.45" />
      <path d={layer([[], ["480,60 520,50 500,150 450,230 440,200 470,120", "640,60 700,90 740,60 700,150 620,220 600,200", "920,80 1000,90 1050,150 960,140"], []], true)} fill="#e6ebc8" opacity="0.5" />
      <path d={layer(CEMETERY, true)} fill="#ccdccb" />
      <path d={layer(THIN_STREAMS)} stroke="#93b8fa" strokeWidth="2" />
      <path d={layer(BANKS)} stroke="#cddbaa" strokeWidth="13" />
      <path d={layer(WATER, true)} fill="#a5c3f8" stroke="#98bafb" strokeWidth="2" />
      <path d={layer(STREAMS)} stroke="#94b6fb" strokeWidth="6" />
      <path d={layer(LANES)} stroke="#c4c3c1" strokeWidth="3" />
      <path d={layer(DASHES)} stroke="#9d9d9d" strokeWidth="2" strokeDasharray="14 8" />
      <path d={layer(ROADS)} stroke="#d2cdc1" strokeWidth="7" />
      <path d={layer(ROADS)} stroke="#ffffff" strokeWidth="5" />
      <path d={layer(YELLOW)} stroke="#e8c766" strokeWidth="7" />
      <path d={layer(YELLOW)} stroke="#fbdc78" strokeWidth="5" />
      <path d={layer(ORANGE)} stroke="#d68f35" strokeWidth="9" />
      <path d={layer(ORANGE)} stroke="#eb9f3f" strokeWidth="7" />
      <circle cx="282" cy="598" r="13" fill="#ffffff" />
      <path d="M282 589v17M273 600l9-5 9 5M278 606l4-2 4 2" stroke="#4a9bef" strokeWidth="2.5" />
    </svg>
  );
}

function MapPanel() {
  const card = "rounded-sm bg-white shadow-[0_2px_6px_rgba(0,0,0,0.3)]";
  return (
    <section aria-label="지도" className="relative min-h-0 flex-1 overflow-hidden bg-[#efece5] font-['Roboto','Noto_Sans_CJK_KR',sans-serif]">
      <MapArt />
      {LABELS.map((l) => (
        <span key={l.text} style={spot(l.t, l.u, l.v)} className="absolute -translate-x-1/2 -translate-y-1/2 whitespace-nowrap leading-none [text-shadow:0_0_3px_#fff,0_0_3px_#fff,0_0_5px_#fff]">
          <span className={l.cls}>{l.text}</span>
        </span>
      ))}
      {MARKERS.map((m) => (
        <button key={m.label} type="button" aria-label={m.label || "서울특별시"} style={spot(1, m.u, m.v)} className="absolute h-[84px] w-[52px] -translate-x-1/2 -translate-y-full">
          <svg viewBox="0 0 52 84" className="block h-full w-full" aria-hidden="true">
            <path d="M26 1C12 1 1 12 1 26c0 20 22 28 24 57h2c2-29 24-37 24-57C51 12 40 1 26 1z" fill="#db4f41" stroke="#ffffff" strokeWidth="2" />
            {m.dot && <circle cx="26" cy="26" r="9" fill="#7b1d16" />}
          </svg>
          {m.label && <span className="absolute top-3 left-1/2 -translate-x-1/2 text-[27px] leading-8 whitespace-nowrap text-black">{m.label}</span>}
        </button>
      ))}
      <div className={`absolute top-5 left-5 flex h-20 text-[34px] leading-none ${card}`}>
        <button type="button" className="w-[130px] border-r border-gray-200 font-medium text-black">지도</button>
        <button type="button" className="w-[130px] text-[#565656]">위성</button>
      </div>
      <button type="button" aria-label="전체 화면" className={`absolute top-5 right-5 flex size-20 items-center justify-center ${card}`}>
        <svg viewBox="0 0 36 36" className="size-9" aria-hidden="true" fill="none" stroke="#666666" strokeWidth="4">
          <path d="M2 12V2h10M24 2h10v10M34 24v10H24M12 34H2V24" />
        </svg>
      </button>
      <div className="absolute right-5 bottom-[-66px] flex flex-col gap-16">
        <button type="button" aria-label="스트리트 뷰" className={`flex size-20 items-center justify-center ${card}`}>
          <svg viewBox="0 0 34 60" className="h-[60px] w-[34px]" aria-hidden="true" fill="#f5bf42" stroke="#87734b" strokeWidth="1.5" strokeLinejoin="round">
            <path d="M9 21h16c3 0 4 2 5 5l3 16-4 2-4-12v27h-7V44h-2v15H9V32L5 44l-4-2 3-16c1-3 2-5 5-5z" />
            <circle cx="17" cy="11" r="10" />
            <path d="M10 22h14l-7 9z" fill="#db8a3c" stroke="none" />
          </svg>
        </button>
        <button type="button" aria-label="확대" className={`size-20 ${card}`} />
      </div>
    </section>
  );
}

const toolBtn = "flex h-[46px] items-center justify-center rounded-lg bg-linear-to-b from-[#fbfcfd] to-[#f0f1f3] shadow-[0_1px_2px_rgba(60,80,100,0.6)]";

function Mute({ className }: { className: string }) {
  return (
    <svg viewBox="0 0 24 24" className={className} fill="currentColor" aria-hidden="true">
      <path d="M1 8h4l4 4v0l6 8v2l-7-6H1zM10 7l6-6v12z" />
      <path d="M2 1l21 21" stroke="currentColor" strokeWidth="1.8" />
    </svg>
  );
}

function Toolbar() {
  return (
    <div className="relative flex h-[75px] items-center justify-between border-t-2 border-[#dbeaf4] bg-linear-to-b from-[#bcd4e8] to-[#aec4d9] px-4">
      <div className="flex items-center">
        <div className="ml-2.5 flex gap-4">
          <span className="size-6 rounded-full border border-[#d9564c] bg-[#ee6a5f]" />
          <span className="size-6 rounded-full border border-[#dba33a] bg-[#f5bd4f]" />
          <span className="size-6 rounded-full border border-[#4fae3f] bg-[#61c554]" />
        </div>
        <div className="ml-[26px] flex gap-0.5">
          <button type="button" aria-label="Back" className={`${toolBtn} w-[50px]`}>
            <svg viewBox="0 0 14 24" className="h-6 w-3.5" fill="none" stroke="#4a4a4a" strokeWidth="2.6" strokeLinecap="round" strokeLinejoin="round"><path d="M12 1.500L2 12l10 10.500" /></svg>
          </button>
          <button type="button" aria-label="Forward" className={`${toolBtn} w-[50px]`}>
            <svg viewBox="0 0 14 24" className="h-6 w-3.5" fill="none" stroke="#a9abad" strokeWidth="2.600" strokeLinecap="round" strokeLinejoin="round"><path d="M2 1.500L12 12L2 22.500" /></svg>
          </button>
        </div>
        <button type="button" aria-label="Sidebar" className={`${toolBtn} ml-5 w-[74px]`}>
          <svg viewBox="0 0 32 24" className="h-6 w-8" fill="none" stroke="#4a4a4a" strokeWidth="2"><rect x="1.500" y="1.500" width="29" height="21" rx="1" /><path d="M12 1v22M4.500 6h4M4.500 10h4M4.500 14h4" /></svg>
        </button>
      </div>
      <div className="absolute inset-x-0 mx-auto flex w-fit">
        <button type="button" aria-label="Privacy Report" className={`${toolBtn} mr-4 -ml-[90px] w-[74px]`}>
          <svg viewBox="0 0 24 28" className="h-7 w-6" aria-hidden="true"><path d="M12 1.500L2 5v11c0 5 4 7.500 10 11 6-3.500 10-6 10-11V5z" fill="#fafafa" stroke="#a3a5a8" strokeWidth="2" strokeLinejoin="round" /><path d="M12 1.500L2 5v11c0 5 4 7.500 10 11z" fill="#a3a5a8" /></svg>
        </button>
        <div className={`${toolBtn} relative w-[1454px] text-[#4a4a4a]`}>
          <input aria-label="Address" defaultValue="localhost" className="w-full bg-transparent pl-1 text-center text-[24px] leading-8 outline-none" />
          <div className="absolute inset-y-0 right-3 flex items-center gap-6 text-[#7a7b7d]">
            <Mute className="size-6" />
            <svg viewBox="0 0 24 28" className="h-7 w-6" fill="none" stroke="currentColor" strokeWidth="2.200"><path d="M22 16a10 10 0 1 1-10-10h4" /><path d="M12 1l7 5-7 5z" fill="currentColor" stroke="none" /></svg>
          </div>
        </div>
      </div>
      <div className="flex gap-4">
        <button type="button" aria-label="Downloads" className={`${toolBtn} w-[74px]`}>
          <svg viewBox="0 0 28 28" className="size-7"><circle cx="14" cy="14" r="14" fill="#4a4a4a" /><path d="M12 6h4v8h5l-7 9-7-9h5z" fill="#fff" /></svg>
        </button>
        <button type="button" aria-label="Share" className={`${toolBtn} w-[74px]`}>
          <svg viewBox="0 0 22 30" className="h-[30px] w-[22px]" fill="none" stroke="#4a4a4a" strokeWidth="2" strokeLinejoin="round"><path d="M7 11H1v18h20V11h-6M11 20V2M6 7.500L11 1.500l5 6" /></svg>
        </button>
        <button type="button" aria-label="Tab overview" className={`${toolBtn} w-[74px]`}>
          <svg viewBox="0 0 26 26" className="size-[26px]" fill="none" stroke="#4a4a4a" strokeWidth="2"><rect x="1.500" y="8" width="17" height="17" rx="1.500" /><path d="M8 5V3q0-1 1-1h15q1 0 1 1v15q0 1-1 1h-2" /></svg>
        </button>
      </div>
    </div>
  );
}

function TabBar() {
  const tab = "relative flex min-w-0 items-center justify-center gap-2.5 border-r-2 border-[#8397a8] bg-linear-to-b from-[#9bafbf] to-[#92a6b6] pl-1.5 text-[#1b3042]";
  return (
    <div role="tablist" className="grid h-[51px] grid-cols-[719fr_718fr_707fr_697fr_693fr_50px] border-y-2 border-[#8397a8] text-[21px] leading-6 font-medium">
      <button role="tab" aria-selected="false" className={tab}>
        <svg viewBox="0 0 32 32" className="size-8"><circle cx="16" cy="16" r="16" fill="#dd4b34" /><circle cx="16" cy="16" r="9" fill="none" stroke="#fff" strokeWidth="1.800" /><path d="M13 11l8 5-8 5z" fill="#fff" /></svg>
        <span className="text-[22px]">FRIENDS - YouTube Music</span>
        <Mute className="absolute right-4 size-6 text-[#4e5f6e]" />
      </button>
      <button role="tab" aria-selected="false" className={tab}>
        <svg viewBox="0 0 32 32" className="size-8"><defs><linearGradient id="nv" x1="0" y1="0" x2="0" y2="1"><stop offset="0" stopColor="#8ae07d" /><stop offset="1" stopColor="#62ad69" /></linearGradient></defs><rect width="32" height="32" rx="1" fill="url(#nv)" /><path d="M9 9h5l4.500 7V9H23v14h-4.500L14 16v7H9z" fill="#fff" /></svg>
        <span className="text-[22px]">NAVER</span>
      </button>
      <button role="tab" aria-selected="true" className="flex min-w-0 items-center justify-center border-r-2 border-[#8397a8] bg-linear-to-b from-[#adc3d8] to-[#a3bacf] pl-12 text-[#0b1a28]">
        실거래가 조회
      </button>
      <button role="tab" aria-selected="false" className={tab}>
        <svg viewBox="0 0 32 30" className="h-[30px] w-8 shrink-0" fill="#cc5a40"><path d="M6 1l4 10h12l4-10 6 16-16 13L0 17z" /></svg>
        1030_springboot/Legacy to SpringBoot.pdf · master ·...
      </button>
      <button role="tab" aria-selected="false" className={tab}>
        <span className="flex h-[30px] w-7 shrink-0 items-center justify-center border-y-4 border-[#4a78cc] text-[11px] leading-3 font-black text-[#4a78cc]">MVN</span>
        Maven Repository: org.webjars.bowergithub.compon...
      </button>
      <button type="button" aria-label="New tab" className="flex items-center justify-center bg-[#90a3b2]">
        <svg viewBox="0 0 22 22" className="size-[22px]" stroke="#2d3d4b" strokeWidth="2"><path d="M11 0v22M0 11h22" /></svg>
      </button>
    </div>
  );
}

const HEADERS = ["번호", "법정동", "아파트이름", "지번", "지역코드", "위도", "경도"];
const ROWS = [
  { cells: ["134", "만리동1가", "LIG 서울역 리가", "231", "11140", "37.5559526", "126.9669431"], tone: "bg-[#a8cbfb]", line: "border-2 border-[#86b6f9]", foot: "border-b-2 border-b-[#98cfa3]" },
  { cells: ["164", "만리동1가", "SY파크힐", "56-11", "11140", "37.5570358", "126.9657765"], tone: "bg-[#c9e5cf]", line: "border-2 border-[#98cfa3]", foot: "border-b-2 border-b-[#e2959c]" },
  { cells: ["146", "만리동1가", "대우디오빌", "62-7", "11140", "37.555036", "126.9671931"], tone: "bg-[#eec7cb]", line: "border-2 border-[#e2959c]", foot: "border-b-2 border-b-[#dee2e6]" },
];

function Picker({ label, value, width, focused }: { label: string; value: string; width: string; focused?: boolean }) {
  return (
    <div className={`relative ${width}`}>
      <select aria-label={label} defaultValue={value} className={`h-[76px] w-full appearance-none rounded-lg border-2 bg-linear-to-b from-[#e4e4e4] to-white pl-3.5 text-[30px] text-[#495057] shadow-[inset_0_0_8px_rgba(0,0,0,0.22)] outline-none ${focused ? "border-[#8bbcfa]" : "border-[#ced4da]"}`}>
        <option>{value}</option>
      </select>
      <svg viewBox="0 0 14 30" className="pointer-events-none absolute top-[23px] right-3 h-[30px] w-3.5" fill="#43474b" aria-hidden="true"><path d="M7 0l7 12H0zM7 30l7-12H0z" /></svg>
    </div>
  );
}

function Deals() {
  return (
    <div className="flex flex-col items-end">
      <div className="w-[1824px]">
        <form className="flex h-[76px] items-center gap-px" onSubmit={(e) => e.preventDefault()}>
          <span className="mr-1 ml-1 flex h-[58px] w-[133px] items-center justify-center rounded-[28px] bg-[#20529a] text-[30px] leading-9 font-bold text-white shadow-[3px_4px_0_#707070]">실거래가</span>
          <input aria-label="아파트이름" placeholder="아파트이름" className="h-[76px] w-[444px] rounded-lg border-2 border-[#ced4da] px-[22px] text-[30px] leading-9 text-[#495057] placeholder:text-[#6c757d]" />
          <button type="submit" className="h-[76px] w-[106px] rounded-lg border-2 border-[#ced4da] text-[30px] leading-9 text-[#495057]">검색</button>
          <Picker label="시도" value="서울특별시" width="w-[260px]" />
          <Picker label="구군" value="중구" width="w-[180px]" />
          <Picker label="동" value="만리동1가" width="w-[224px]" focused />
        </form>
        <table className="w-full table-fixed border-collapse text-center text-[30px] leading-[46px] text-[#212529]">
          <colgroup>
            <col className="w-[458px]" />
            <col className="w-[201px]" />
            <col className="w-[291px]" />
            <col className="w-[151px]" />
            <col className="w-[185px]" />
            <col className="w-[259px]" />
            <col />
          </colgroup>
          <thead>
            <tr>
              {HEADERS.map((h) => (
                <th key={h} className="h-[99px] border-2 border-b-4 border-[#dee2e6] p-0 font-bold">{h}</th>
              ))}
            </tr>
          </thead>
          <tbody>
            {ROWS.map((r) => (
              <React.Fragment key={r.cells[0]}>
                <tr className={r.tone}>
                  {r.cells.map((c, i) => (
                    <td key={i} className={`h-[99px] p-0 ${r.line} ${/[가-힣]/.test(c) ? "" : "text-[32px]"}`}>{c}</td>
                  ))}
                </tr>
                <tr>
                  <td className={`h-[49px] border-l-2 border-l-[#dee2e6] p-0 ${r.foot}`}>{`${r.cells[1]} ${r.cells[2]} ${r.cells[3]}`}</td>
                </tr>
              </React.Fragment>
            ))}
          </tbody>
        </table>
      </div>
    </div>
  );
}

function Page() {
  return (
    <div className="flex min-w-0 flex-1 flex-col overflow-hidden bg-white">
      <header className="h-[358px] overflow-hidden rounded-b-xl bg-[#307bf6] text-center">
        <h1 className="-mt-9 text-[74px] leading-[96px] font-medium text-[#f5c344]">Happy House</h1>
        <p className="mt-3.5 text-[30px] leading-[48px] text-white">나만의 주택 검색 플랫폼</p>
        <div className="mt-8 mr-16 flex justify-end gap-[7px] text-[30px] leading-[48px] text-white">
          <button type="button" className="h-[76px] rounded-lg bg-[#4ba1b7] px-[26px]">회원가입</button>
          <button type="button" className="h-[76px] rounded-lg bg-[#4ba1b7] px-[26px]">로그인</button>
        </div>
      </header>
      <nav className="flex h-28 items-center gap-8 bg-[#f5c344] px-12 text-[30px] leading-[48px] text-[#212529]">
        <a href="#deals">실거래가 조회</a>
        <a href="#clinics">안심병원/선별진료소</a>
        <a href="#favorites">관심지역</a>
        <a href="#notice">공지사항</a>
        <a href="#sitemap">사이트맵</a>
      </nav>
      <main className="grid min-h-0 flex-1 grid-cols-[3fr_1fr] pt-[60px]">
        <div className="flex min-h-0 flex-col px-[30px]">
          <Deals />
          <div className="h-8 shrink-0" />
          <MapPanel />
        </div>
        <aside className="text-[#212529]">
          <h2 className="text-[60px] leading-[76px] font-medium">거래정보</h2>
          <h3 className="mt-3.5 text-[38px] leading-[48px] font-medium">행복주택</h3>
          <table className="mt-4 border-collapse text-[30px] leading-[48px]">
            <thead>
              <tr>
                {["번호", "법정동", "아파트이름", "거래가"].map((h) => (
                  <th key={h} className="h-[101px] border-t-2 border-b-4 border-[#dee2e6] px-6 py-0 font-bold">{h}</th>
                ))}
              </tr>
            </thead>
          </table>
        </aside>
      </main>
    </div>
  );
}

export default function App() {
  return (
    <div className="flex h-screen flex-col overflow-hidden bg-white px-28 pt-[76px] pb-[147px] font-['Inter','Noto_Sans_CJK_KR',sans-serif]">
      <div className="flex min-h-0 flex-1 flex-col rounded-xl shadow-[0_0_2px_rgba(0,0,0,0.6),0_40px_90px_rgba(0,0,0,0.5)]">
        <div className="flex min-h-0 flex-1 flex-col overflow-hidden rounded-xl">
          <Toolbar />
          <TabBar />
          <div className="flex min-h-0 flex-1">
            <Page />
            <div className="w-[30px] border-l-2 border-[#e8e8e8] bg-[#fafafa] pt-[124px]">
              <div className="mx-auto h-[1458px] w-4 rounded-full bg-[#c1c1c1]" />
            </div>
          </div>
        </div>
      </div>
    </div>
  );
}
